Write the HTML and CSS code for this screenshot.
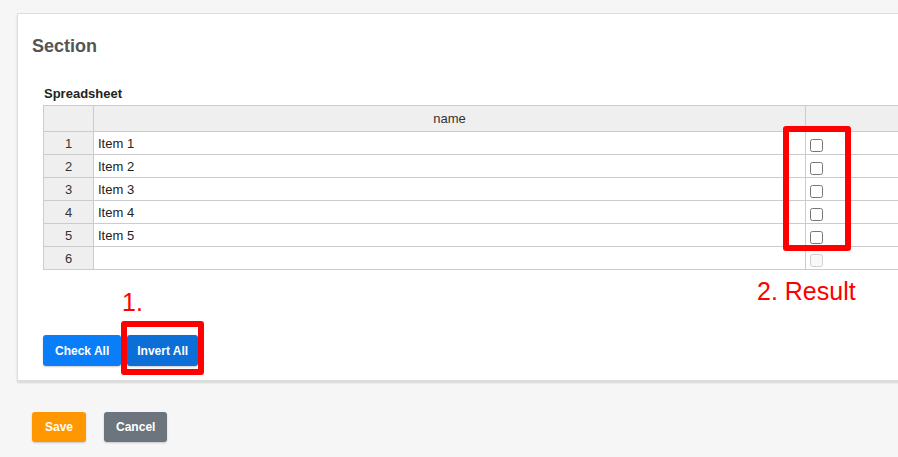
FILE: index.html
```html
<!DOCTYPE html>
<html>
<head>
<meta charset="utf-8">
<link rel="stylesheet" href="styles.css">
</head>
<body>
<div class="card">
  <h2 class="title">Section</h2>
  <div class="body">
    <div class="label">Spreadsheet</div>
    <table class="sheet">
      <colgroup><col class="c-idx"><col class="c-name"><col class="c-chk"></colgroup>
      <thead>
        <tr><th class="idx"></th><th>name</th><th></th></tr>
      </thead>
      <tbody>
        <tr><td class="idx">1</td><td class="txt">Item 1</td><td class="chk"><input type="checkbox"></td></tr>
        <tr><td class="idx">2</td><td class="txt">Item 2</td><td class="chk"><input type="checkbox"></td></tr>
        <tr><td class="idx">3</td><td class="txt">Item 3</td><td class="chk"><input type="checkbox"></td></tr>
        <tr><td class="idx">4</td><td class="txt">Item 4</td><td class="chk"><input type="checkbox"></td></tr>
        <tr><td class="idx">5</td><td class="txt">Item 5</td><td class="chk"><input type="checkbox"></td></tr>
        <tr><td class="idx">6</td><td class="txt"></td><td class="chk"><input type="checkbox" disabled></td></tr>
      </tbody>
    </table>
    <div class="actions">
      <button class="btn btn-blue">Check All</button>
      <button class="btn btn-blue-dark">Invert All</button>
    </div>
  </div>
</div>
<div class="footer">
  <button class="btn btn-orange">Save</button>
  <button class="btn btn-gray">Cancel</button>
</div>

<div class="note note-1">1.</div>
<div class="note note-2">2. Result</div>
<div class="mark mark-chk"></div>
<div class="mark mark-btn"></div>
</body>
</html>
```

FILE: styles.css
```css
html, body {
  margin: 0;
  padding: 0;
  overflow: hidden;
}
body {
  background: #f6f6f6;
  font-family: "Liberation Sans", Arial, sans-serif;
  width: 898px;
  height: 457px;
  position: relative;
}
.card {
  margin: 13px 0 0 17px;
  width: 1000px;
  background: #fff;
  border: 1px solid #dedede;
  box-shadow: 0 2px 2px rgba(0, 0, 0, 0.12);
  padding: 22px 0 14px 14px;
}
.title {
  margin: 0;
  font-size: 18px;
  line-height: 20px;
  font-weight: bold;
  color: #555;
}
.body {
  padding-left: 11px;
}
.label {
  margin-top: 30px;
  padding-left: 1px;
  font-size: 13px;
  line-height: 15px;
  font-weight: bold;
  color: #222;
}
.sheet {
  margin-top: 4px;
  border-collapse: collapse;
  table-layout: fixed;
  width: 862px;
  font-size: 13px;
  color: #222;
}
.c-idx { width: 50px; }
.c-name { width: 712px; }
.c-chk { width: 100px; }
.sheet th, .sheet td {
  border: 1px solid #cccccc;
  padding: 0;
}
.sheet th {
  height: 25px;
  background: #efefef;
  font-weight: normal;
  color: #333;
  text-align: center;
}
.sheet td {
  height: 22px;
  vertical-align: middle;
}
.sheet td.idx {
  background: #efefef;
  text-align: center;
  color: #333;
}
.sheet td.txt {
  padding-left: 4px;
}
.sheet td.chk input {
  display: block;
  width: 13px;
  height: 13px;
  margin: 7px 0 2px 4px;
}
.actions {
  margin-top: 65px;
  display: flex;
  gap: 6px;
}
.btn {
  border: none;
  border-radius: 3px;
  height: 31px;
  font-family: "Liberation Sans", Arial, sans-serif;
  font-size: 12px;
  font-weight: bold;
  color: #fff;
  padding: 0 12px;
  box-shadow: 0 1px 2px rgba(0, 0, 0, 0.2);
}
.btn-blue { background: #0a7ef9; }
.btn-blue-dark { background: #0c6fd8; padding: 0 10px; }
.btn-orange { background: #ff9800; padding: 0 13px; height: 30px; }
.btn-gray { background: #6c757d; height: 30px; }
.footer {
  margin-top: 31px;
  padding-left: 32px;
  display: flex;
  gap: 18px;
}
.note {
  position: absolute;
  color: #ff0000;
  font-size: 25px;
  line-height: 29px;
}
.note-1 { left: 122px; top: 288px; }
.note-2 { left: 757px; top: 277px; }
.mark {
  position: absolute;
  border: 6px solid #ff0000;
  border-radius: 3px;
  box-sizing: border-box;
}
.mark-chk { left: 783px; top: 126px; width: 68px; height: 125px; }
.mark-btn { left: 121px; top: 321px; width: 83px; height: 54px; }
```
